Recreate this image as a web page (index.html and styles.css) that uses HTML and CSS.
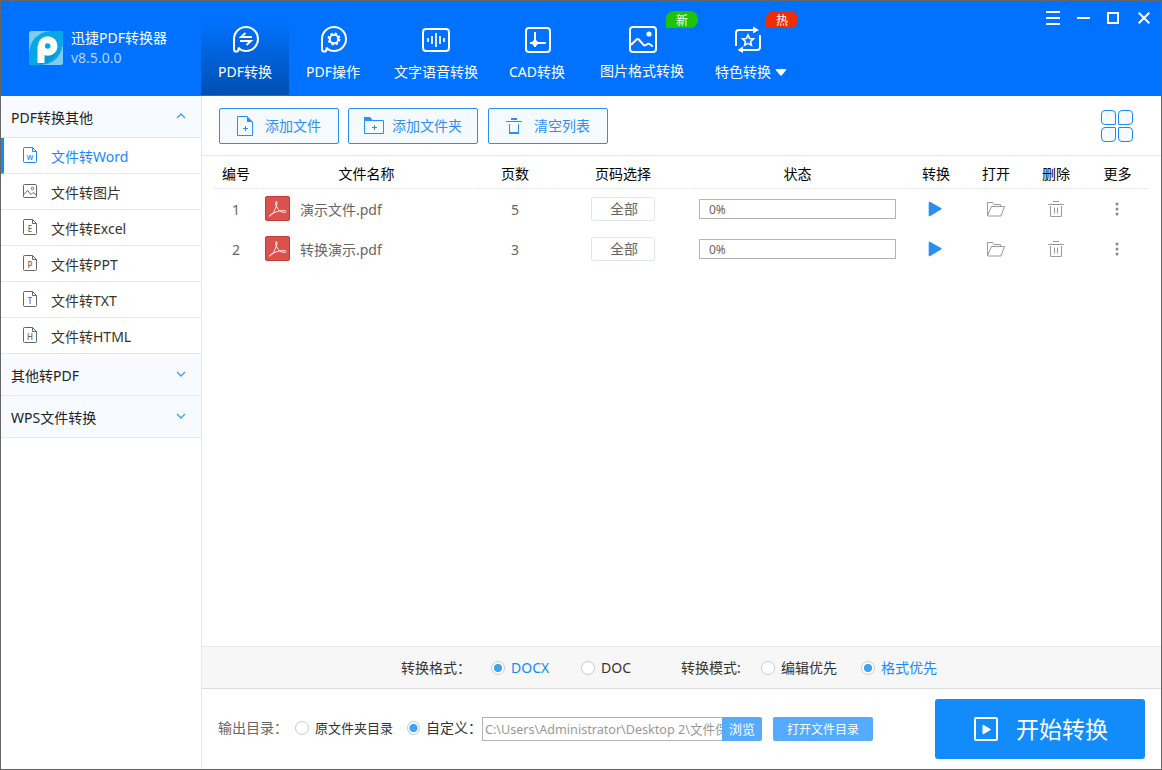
FILE: index.html
```html
<!DOCTYPE html>
<html lang="zh-CN">
<head>
  <meta charset="UTF-8" />
  <meta name="viewport" content="width=device-width, initial-scale=1.0"/>
  <title>迅捷PDF转换器</title>
  <link rel="stylesheet" href="styles.css">
</head>
<body>

  <!-- shared icons -->
  <svg class="sprite" width="0" height="0">
    <symbol id="icon-doc" viewBox="0 0 14 16">
      <path d="M9.5.5H1.5a1 1 0 0 0-1 1v13a1 1 0 0 0 1 1h11a1 1 0 0 0 1-1V4.5zM9.5.5v4h4" fill="none" stroke="currentColor"/>
    </symbol>
    <symbol id="icon-pdf" viewBox="0 0 25 25">
      <rect x=".5" y=".5" width="24" height="24" rx="1.5" fill="#d9524e" stroke="#c43a36"/>
      <path d="M4.5 20.200c1.600-.2 4.500-4.300 6.200-8.200 1.500-3.500 1.700-6.500.7-6.500-1.200 0-.9 3 .4 5.600 1.600 3.200 4.500 5.500 7.700 5.300 2.400-.2 1.800-1.900-.8-1.900-4 0-9.500 1.800-12.500 3.800-1.200.8-1.900 1.600-1.700 1.900z" fill="none" stroke="#fff" stroke-width=".9"/>
    </symbol>
    <symbol id="icon-play" viewBox="0 0 14 16">
      <path d="M1.500 1.500l11.200 6.300L1.500 14.500z" fill="#2b8ff2" stroke="#2b8ff2" stroke-width="1.600" stroke-linejoin="round"/>
    </symbol>
    <symbol id="icon-folder" viewBox="0 0 18 15">
      <path d="M.5 13.500V.5h5l1.500 2h6.500v2M.5 13.500l4-9h13l-3.500 9.500H1z" fill="none" stroke="#999"/>
    </symbol>
    <symbol id="icon-trash" viewBox="0 0 16 16">
      <path d="M5 .5h6M0 3.500h16M2.500 5v10.500h11V5M6.500 6.500v6M9.500 6.500v6" fill="none" stroke="#999"/>
    </symbol>
    <symbol id="icon-more" viewBox="0 0 4 14">
      <circle cx="2" cy="2" r="1.500" fill="#888"/>
      <circle cx="2" cy="7" r="1.500" fill="#888"/>
      <circle cx="2" cy="12" r="1.500" fill="#888"/>
    </symbol>
  </svg>

  <div class="window">
    <header class="header">
      <div class="brand">
        <svg width="34" height="34" viewBox="0 0 34 34">
          <rect width="34" height="34" rx="2.500" fill="#7ccdf1"/>
          <path d="M0 25C0 8 10 0 25 0h6.500A2.500 2.500 0 0 1 34 2.500V9c0 15-9 25-24 25H2.500A2.500 2.500 0 0 1 0 31.500z" fill="#06a7e6"/>
          <path d="M17 25l11-9-2 9-7 6-9 3z" fill="#0899d5"/>
          <circle cx="18.700" cy="15" r="6.300" fill="none" stroke="#fff" stroke-width="7"/>
          <path d="M8.500 15h7v17h-7z" fill="#fff"/>
        </svg>
        <div class="brand-text">
          <div class="brand-name">迅捷PDF转换器</div>
          <div class="brand-version">v8.5.0.0</div>
        </div>
      </div>

      <nav class="nav">
        <a class="nav-item active">
          <svg width="28" height="28" viewBox="0 0 28 28" fill="none" stroke="#fff" stroke-width="2">
            <path d="M2 14A12 12 0 1 1 14 26c-3 0-6-1.200-7.500-3.300M2 14v10.500c0 2.800 4.500 2.800 4.500 0v-2"/>
            <path d="M20 12H9l4.500-4M8 16h11l-4.500 4" stroke-width="1.900"/>
          </svg>
          <span>PDF转换</span>
        </a>
        <a class="nav-item">
          <svg width="28" height="28" viewBox="0 0 28 28" fill="none" stroke="#fff" stroke-width="2">
            <path d="M2 14A12 12 0 1 1 14 26c-3 0-6-1.200-7.500-3.300M2 14v10.500c0 2.800 4.500 2.800 4.500 0v-2"/>
            <circle cx="14" cy="14" r="4.200"/>
            <circle cx="14" cy="14" r="5.600" stroke-dasharray="2.400 2" stroke-width="1.800"/>
          </svg>
          <span>PDF操作</span>
        </a>
        <a class="nav-item nav-voice">
          <svg width="28" height="28" viewBox="0 0 28 28" fill="none" stroke="#fff" stroke-width="2">
            <rect x="1" y="4" width="26" height="22" rx="3"/>
            <path d="M6 13v4M10 11v8M14 8v14M18 11v8M22 13v4" stroke-width="1.700"/>
          </svg>
          <span>文字语音转换</span>
        </a>
        <a class="nav-item nav-cad">
          <svg width="28" height="28" viewBox="0 0 28 28" fill="none" stroke="#fff" stroke-width="2">
            <rect x="2" y="3" width="24" height="24" rx="3"/>
            <path d="M11 7v15M6 18h16"/>
            <path d="M8 17l3-3 3 3v2l-3 3-3-3z" fill="#fff" stroke="none"/>
          </svg>
          <span>CAD转换</span>
        </a>
        <a class="nav-item nav-image">
          <svg width="28" height="28" viewBox="0 0 28 28" fill="none" stroke="#fff" stroke-width="2">
            <rect x="1" y="2" width="26" height="25" rx="3"/>
            <path d="M2 20l5.500-5.500c1.200-1 1.700-.5 2.500.3l4.500 5c1.200 1.200 2 .7 3 0 1.500-1.400 2.300-1.500 3.300-.5l3 2.200"/>
            <circle cx="20" cy="9" r="2.600" fill="#fff" stroke="none"/>
          </svg>
          <span>图片格式转换</span>
          <i class="badge badge-new">新</i>
        </a>
        <a class="nav-item nav-special">
          <svg width="28" height="28" viewBox="0 0 28 28" fill="none" stroke="#fff" stroke-width="2">
            <path d="M2 21V8q0-3 3-3h14M26 10v12q0 3-3 3H9"/>
            <path d="M19 1.500l6 3.500-6 3.500zM9 21.500L3.500 25 9 28z" fill="#fff" stroke="none"/>
            <path d="M14 10l1.600 3.500 3.900.4-2.900 2.600.8 3.800-3.400-1.900-3.400 1.900.8-3.800-2.900-2.600 3.900-.4z" stroke-width="1.600"/>
          </svg>
          <span>特色转换<svg class="caret" width="12" height="7" viewBox="0 0 12 7"><path d="M1.500 0h9q1.500 0 .6 1.200L7 6q-1 1-2 0L.9 1.200Q0 0 1.500 0z" fill="#fff"/></svg></span>
          <i class="badge badge-hot">热</i>
        </a>
      </nav>

      <div class="window-buttons">
        <svg width="14" height="14" viewBox="0 0 14 14"><path d="M0 1h14M0 7h14M0 13h14"/></svg>
        <svg width="13" height="14" viewBox="0 0 13 14"><path d="M0 7h13"/></svg>
        <svg width="12" height="12" viewBox="0 0 12 12"><path d="M1 1h10v10H1z"/></svg>
        <svg class="close" width="12" height="12" viewBox="0 0 12 12"><path d="M.7.7l10.600 10.600M11.300.7L.7 11.300"/></svg>
      </div>
    </header>

    <div class="body">
      <aside class="sidebar">
        <div class="group">PDF转换其他
          <svg width="10" height="6" viewBox="0 0 10 6"><path d="M1 5l4-4 4 4"/></svg>
        </div>
        <a class="item active">
          <span class="doc"><svg width="14" height="16"><use href="#icon-doc"/></svg><b>w</b></span>文件转Word
        </a>
        <a class="item">
          <span class="doc"><svg width="14" height="14" viewBox="0 0 14 14" fill="none" stroke="currentColor"><rect x=".5" y=".5" width="13" height="13" rx="1"/><path d="M1 10.500l3.500-4 3.500 4 2-2 3 2.500"/><circle cx="9.500" cy="4.500" r="1.200"/></svg></span>文件转图片
        </a>
        <a class="item">
          <span class="doc"><svg width="14" height="16"><use href="#icon-doc"/></svg><b>E</b></span>文件转Excel
        </a>
        <a class="item">
          <span class="doc"><svg width="14" height="16"><use href="#icon-doc"/></svg><b>P</b></span>文件转PPT
        </a>
        <a class="item">
          <span class="doc"><svg width="14" height="16"><use href="#icon-doc"/></svg><b>T</b></span>文件转TXT
        </a>
        <a class="item">
          <span class="doc"><svg width="14" height="16"><use href="#icon-doc"/></svg><b>H</b></span>文件转HTML
        </a>
        <div class="group">其他转PDF
          <svg width="10" height="6" viewBox="0 0 10 6"><path d="M1 1l4 4 4-4"/></svg>
        </div>
        <div class="group">WPS文件转换
          <svg width="10" height="6" viewBox="0 0 10 6"><path d="M1 1l4 4 4-4"/></svg>
        </div>
      </aside>

      <main class="main">
        <div class="toolbar">
          <button class="btn-line">
            <svg width="16" height="20" viewBox="0 0 16 20"><path d="M10.500.5H.5v19h15v-14M8.500 10v5M6 12.500h5" fill="none" stroke="#2b8ff2"/><path d="M10 0l6 6h-6z" fill="#2b8ff2"/></svg>
            添加文件
          </button>
          <button class="btn-line btn-folder">
            <svg width="20" height="18" viewBox="0 0 20 18"><path d="M.5 3.500h19v13H.5zM10.500 8v5M8 10.500h5" fill="none" stroke="#2b8ff2"/><path d="M0 0h6l3 3.500H0z" fill="#2b8ff2"/></svg>
            添加文件夹
          </button>
          <button class="btn-line">
            <svg width="16" height="16" viewBox="0 0 16 16"><path d="M5 0h6v2H5zM3 14h10v2H3z" fill="#2b8ff2"/><path d="M0 3.500h16M3.500 6v9M12.500 6v9" fill="none" stroke="#2b8ff2"/></svg>
            清空列表
          </button>
          <div class="grid-view"><i></i><i></i><i></i><i></i></div>
        </div>

        <div class="table">
          <div class="row row-head">
            <div>编号</div>
            <div>文件名称</div>
            <div>页数</div>
            <div>页码选择</div>
            <div>状态</div>
            <div>转换</div>
            <div>打开</div>
            <div>删除</div>
            <div>更多</div>
          </div>
          <div class="row">
            <div class="num">1</div>
            <div class="file"><svg width="25" height="25"><use href="#icon-pdf"/></svg><span>演示文件.pdf</span></div>
            <div class="num">5</div>
            <div><span class="pages">全部</span></div>
            <div><span class="progress">0%</span></div>
            <div class="action"><svg width="14" height="16"><use href="#icon-play"/></svg></div>
            <div><svg width="18" height="15"><use href="#icon-folder"/></svg></div>
            <div><svg width="16" height="16"><use href="#icon-trash"/></svg></div>
            <div class="action"><svg width="4" height="14"><use href="#icon-more"/></svg></div>
          </div>
          <div class="row">
            <div class="num">2</div>
            <div class="file"><svg width="25" height="25"><use href="#icon-pdf"/></svg><span>转换演示.pdf</span></div>
            <div class="num">3</div>
            <div><span class="pages">全部</span></div>
            <div><span class="progress">0%</span></div>
            <div class="action"><svg width="14" height="16"><use href="#icon-play"/></svg></div>
            <div><svg width="18" height="15"><use href="#icon-folder"/></svg></div>
            <div><svg width="16" height="16"><use href="#icon-trash"/></svg></div>
            <div class="action"><svg width="4" height="14"><use href="#icon-more"/></svg></div>
          </div>
        </div>

        <div class="options">
          <span>转换格式：</span>
          <label class="checked"><i class="radio"></i>DOCX</label>
          <label><i class="radio"></i>DOC</label>
          <span>转换模式:</span>
          <label><i class="radio"></i>编辑优先</label>
          <label class="checked"><i class="radio"></i>格式优先</label>
        </div>

        <div class="output">
          <span class="output-title">输出目录：</span>
          <label class="output-source"><i class="radio"></i>原文件夹目录</label>
          <label class="output-custom checked"><i class="radio"></i>自定义：</label>
          <div class="path">C:\Users\Administrator\Desktop 2\文件保</div>
          <button class="btn-browse">浏览</button>
          <button class="btn-open">打开文件目录</button>
          <button class="btn-start">
            <svg width="24" height="24" viewBox="0 0 24 24"><rect x="1" y="1" width="22" height="22" rx="1" fill="none" stroke="#fff" stroke-width="2"/><path d="M9 8l7.500 4.500L9 17z" fill="#fff" stroke="#fff" stroke-linejoin="round"/></svg>
            开始转换
          </button>
        </div>
      </main>
    </div>
  </div>

</body>
</html>
```

FILE: styles.css
```css
* {
  box-sizing: border-box;
}

body {
  margin: 0;
  font-family: 'Noto Sans', 'Noto Sans CJK SC', sans-serif;
  font-size: 14px;
  line-height: 20px;
  color: #333;
  background: white;
}

svg {
  display: block;
  flex-shrink: 0;
}

button {
  font-family: inherit;
  font-size: 14px;
  line-height: 20px;
  padding: 0;
  border: none;
  cursor: pointer;
}

i {
  font-style: normal;
}

.sprite {
  position: absolute;
}

.window {
  display: flex;
  flex-direction: column;
  width: 1162px;
  height: 770px;
  border: 1px solid #666;
  overflow: hidden;
  white-space: nowrap;
}

/* header */
.header {
  display: flex;
  height: 95px;
  background: #0072ff;
  color: white;
}

.brand {
  display: flex;
  width: 200px;
  padding: 27px 0 0 28px;
}

.brand svg {
  margin-top: 3px;
}

.brand-text {
  margin-left: 8px;
}

.brand-version {
  color: #b3d5ff;
}

.nav {
  display: flex;
}

.nav-item {
  position: relative;
  display: flex;
  flex-direction: column;
  align-items: center;
  width: 88px;
  height: 94px;
  padding-top: 24px;
}

.nav-item > svg {
  margin-left: 2px;
}

.nav-item span {
  display: flex;
  align-items: center;
  margin-top: 9px;
}

.nav-item.active {
  background: linear-gradient(#0072ff 20%, #004fb2);
}

.nav-voice {
  width: 118px;
}

.nav-voice > svg {
  margin-left: 0;
}

.nav-cad {
  width: 84px;
}

.nav-image {
  width: 126px;
}

.nav-image span {
  margin-top: 8px;
}

.nav-special {
  width: 92px;
}

.nav-special > svg {
  margin: 0 6px 0 0;
}

.caret {
  margin-left: 4px;
}

.badge {
  position: absolute;
  top: 10px;
  width: 32px;
  height: 17px;
  border-radius: 8px 8px 8px 0;
  font-size: 12px;
  line-height: 19px;
  text-align: center;
}

.badge-new {
  left: 87px;
  background: #1fc400;
}

.badge-hot {
  left: 61px;
  background: #f02d00;
}

.window-buttons {
  display: flex;
  align-items: center;
  gap: 17px;
  height: 14px;
  margin: 10px 11px 0 auto;
}

.window-buttons svg {
  fill: none;
  stroke: white;
  stroke-width: 2;
}

.window-buttons .close {
  margin-left: 2px;
}

/* sidebar */
.body {
  display: flex;
  flex: 1;
}

.sidebar {
  width: 201px;
  border-right: 1px solid #e8e8e8;
}

.group {
  display: flex;
  align-items: center;
  justify-content: space-between;
  height: 42px;
  padding: 2px 15px 0 10px;
  background: #f7faff;
  border-bottom: 1px solid #e8e8e8;
  color: #222;
}

.group svg {
  margin-top: -4px;
  fill: none;
  stroke: #3d9cf5;
  stroke-width: 1.3;
}

.item {
  display: flex;
  align-items: center;
  height: 36px;
  padding: 2px 0 0 22px;
  border-bottom: 1px solid #e8e8e8;
}

.item.active {
  padding-left: 19px;
  border-left: 3px solid #128bf7;
  color: #1989fa;
}

.doc {
  position: relative;
  width: 14px;
  margin: -4px 14px 0 0;
  color: #666;
}

.active .doc {
  color: #1989fa;
}

.doc b {
  position: absolute;
  top: 5px;
  left: 0;
  width: 14px;
  font-size: 8px;
  font-weight: 500;
  line-height: 9px;
  text-align: center;
}

/* file list */
.main {
  display: flex;
  flex-direction: column;
  flex: 1;
}

.toolbar {
  display: flex;
  height: 60px;
  padding: 12px 28px 0 17px;
  border-bottom: 1px solid #e8e8e8;
}

.btn-line {
  display: flex;
  align-items: center;
  justify-content: center;
  gap: 12px;
  width: 120px;
  height: 36px;
  margin-right: 9px;
  border: 1px solid #2b8ff2;
  border-radius: 2px;
  background: #f5faff;
  color: #2b8ff2;
}

.btn-folder {
  gap: 8px;
  width: 130px;
  margin-right: 10px;
}

.grid-view {
  display: grid;
  grid-template-columns: 15px 15px;
  grid-template-rows: 15px 15px;
  gap: 2px;
  margin: 2px 0 0 auto;
}

.grid-view i {
  border: 1px solid #1989fa;
  border-radius: 4px 4px 1px 4px;
  background: #f5faff;
}

.grid-view i:nth-child(2) {
  border-radius: 4px 4px 4px 1px;
}

.grid-view i:nth-child(3) {
  border-radius: 4px 1px 4px 4px;
}

.grid-view i:nth-child(4) {
  border-radius: 1px 4px 4px 4px;
}

.table {
  flex: 1;
  padding-left: 11px;
}

.row {
  display: grid;
  grid-template-columns: 46px 211px 82px 130px 215px 58px 58px 58px 61px;
  gap: 2px;
  height: 40px;
  color: #666;
}

.row div {
  display: flex;
  align-items: center;
  justify-content: center;
}

.row-head {
  height: 33px;
  color: #000;
}

.row-head div {
  padding-top: 4px;
  border-bottom: 1px solid #ebebeb;
}

.row .num {
  padding-top: 2px;
}

.row .file {
  justify-content: flex-start;
  gap: 10px;
  padding: 0 0 1px 4px;
}

.file span {
  padding-top: 3px;
}

.row .action {
  padding: 0 2px 1px 0;
}

.pages {
  width: 64px;
  height: 24px;
  padding-left: 2px;
  border: 1px solid #dfe4f0;
  border-radius: 2px;
  line-height: 21px;
  text-align: center;
}

.progress {
  width: 197px;
  height: 20px;
  padding-left: 9px;
  border: 1px solid #b3b3b3;
  font-size: 12px;
  line-height: 19px;
}

/* bottom bars */
.options {
  display: grid;
  grid-template-columns: 90px 90px 100px 80px 100px 100px;
  align-items: center;
  height: 43px;
  padding-left: 199px;
  border-top: 1px solid #e8e8e8;
  border-bottom: 1px solid #ddd;
  background: #f7f7f7;
}

label {
  display: flex;
  align-items: center;
  gap: 6px;
}

.options .checked {
  color: #1989fa;
}

.radio {
  width: 14px;
  height: 14px;
  border: 1px solid #ccc;
  border-radius: 50%;
  background: white;
}

.checked .radio {
  background: radial-gradient(circle, #40a4f4 3.7px, white 4.5px);
}

.output {
  display: flex;
  align-items: center;
  height: 80px;
  padding: 0 16px;
}

.output-title {
  width: 77px;
  padding-bottom: 2px;
  color: #666;
}

.output-source {
  width: 112px;
  padding-bottom: 3px;
  font-size: 13px;
}

.output-custom {
  width: 75px;
  padding-bottom: 3px;
}

.path {
  width: 240px;
  height: 24px;
  padding-left: 2px;
  border: 1px solid #b3b3b3;
  border-right: none;
  overflow: hidden;
  font-size: 12.6px;
  line-height: 24px;
  color: #999;
}

.btn-browse {
  width: 40px;
  height: 24px;
  border-radius: 0 2px 2px 0;
  background: #54abff;
  color: white;
  font-size: 13px;
}

.btn-open {
  width: 100px;
  height: 24px;
  padding-top: 1px;
  margin-left: 11px;
  border-radius: 2px;
  background: #54abff;
  color: white;
  font-size: 12px;
}

.btn-start {
  display: flex;
  align-items: center;
  justify-content: center;
  gap: 18px;
  width: 210px;
  height: 60px;
  padding: 0 0 1px 2px;
  margin-left: auto;
  border-radius: 3px;
  background: #128cfa;
  color: white;
  font-size: 23px;
}
```
